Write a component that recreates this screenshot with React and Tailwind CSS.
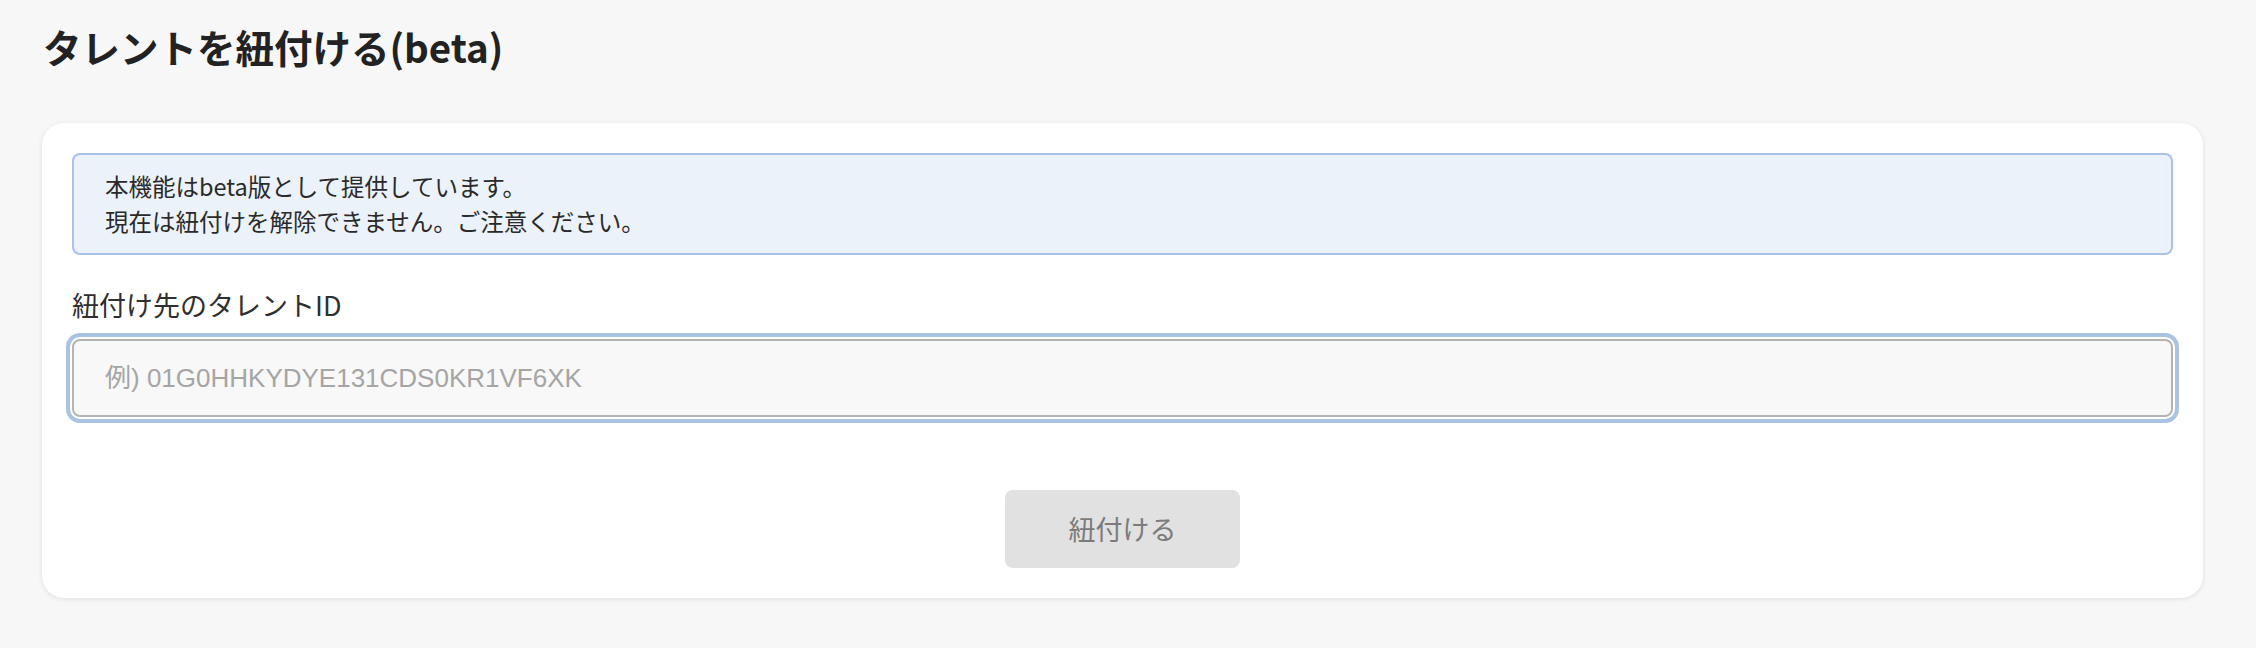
export default function App() {
  const jp = { fontFamily: '"Noto Sans CJK JP", "Noto Sans", sans-serif' };
  return (
    <div
      className="min-h-screen w-full bg-[#f7f7f7] pt-[22px] pl-[42px] pr-[53px] pb-[40px]"
      style={jp}
    >
      <h1 className="pl-[1px] text-[38.5px] leading-[48px] font-bold text-[#222222]">
        タレントを紐付ける(beta)
      </h1>
      <div className="mt-[53px] rounded-[22px] bg-white p-[30px] shadow-[0_1px_5px_rgba(0,0,0,0.10)]">
        <div className="rounded-[8px] border-2 border-[#a6c4ea] bg-[#ecf2fa] px-[31px] py-[14px] text-[23.5px] leading-[35px] text-[#2a2a2a]">
          <p>本機能はbeta版として提供しています。</p>
          <p>現在は紐付けを解除できません。ご注意ください。</p>
        </div>
        <label className="mt-[32px] block text-[27px] leading-[36px] text-[#2f2f2f]">
          紐付け先のタレントID
        </label>
        <div className="mt-[16px]">
          <input
            type="text"
            placeholder="例) 01G0HHKYDYE131CDS0KR1VF6XK"
            className="block h-[78px] w-full rounded-[8px] border-2 border-[#b4b4b4] bg-[#f8f8f8] px-[31px] text-[26px] text-[#333333] outline-none shadow-[0_0_0_2px_#ffffff,0_0_0_6px_#aac3e2] placeholder:text-[#a5a5a5]"
            style={{ fontFamily: '"Liberation Sans", "Noto Sans CJK JP", sans-serif' }}
          />
        </div>
        <div className="mt-[73px] flex justify-center">
          <button
            type="button"
            className="h-[78px] w-[235px] rounded-[8px] bg-[#e0e1e0] text-[27px] text-[#7b7b7b]"
          >
            紐付ける
          </button>
        </div>
      </div>
    </div>
  );
}
